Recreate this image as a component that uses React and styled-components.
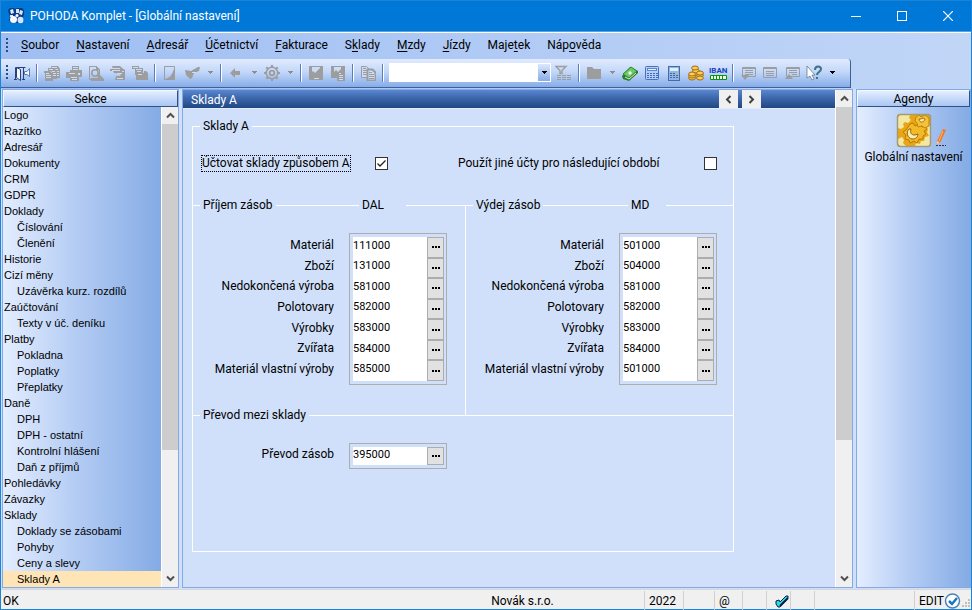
import React from "react";
import styled, { createGlobalStyle, css } from "styled-components";

const GlobalStyle = createGlobalStyle`
  *, *::before, *::after { box-sizing: border-box; }
  html, body { margin: 0; padding: 0; }
  body, button, input { font: 12px/16px Roboto, "Liberation Sans", sans-serif; color: #000; }
  button { padding: 0; border: 0; background: none; }
`;

const Window = styled.div`
  display: flex;
  flex-direction: column;
  min-height: 100vh;
  border: 1px solid #1a84d8;
  background: linear-gradient(90deg, #9ebef3, #c1d6f7);
`;

const TitleBar = styled.header`
  display: flex;
  align-items: center;
  height: 31px;
  padding-left: 7px;
  background: #0078d7;
  color: #fff;
  border-bottom: 1px solid #5e9fdf;
`;
const WindowTitle = styled.h1`
  margin: 0 0 0 5px;
  flex: 1;
  font-size: 12px;
  font-weight: 400;
`;
const CaptionButton = styled.button`
  display: grid;
  place-items: center;
  width: 46px;
  height: 30px;
  color: #fff;
`;

const MenuBar = styled.nav`
  display: flex;
  align-items: center;
  height: 27px;
  padding: 0 0 2px 5px;
  border-top: 1px solid #fff;
`;
const Grip = styled.span`
  width: 2px;
  height: 15px;
  background: repeating-linear-gradient(#2b4a80 0 2px, transparent 2px 4px);
`;
const MenuList = styled.ul`
  display: flex;
  gap: 17px;
  margin: 0 0 0 13px;
  padding: 0;
  list-style: none;
`;
const MenuButton = styled.button`
  display: block;
  white-space: nowrap;
  u { text-underline-offset: 2px; text-decoration-skip-ink: none; }
`;

const ToolBar = styled.div`
  display: flex;
  align-items: center;
  align-self: flex-start;
  height: 29px;
  padding: 0 11px 1px 5px;
  margin-bottom: 1px;
  border-radius: 0 3px 0 0;
  border-right: 1px solid #3f5f96;
  border-bottom: 1px solid #3f5f96;
  background: linear-gradient(#e1ebff, #c3d8f9 45%, #85ace8);
`;
const ToolButton = styled.button`
  display: grid;
  place-items: center;
  width: ${(p) => (p.$drop ? 14 : 22)}px;
  height: 24px;
  margin-left: ${(p) => (p.$first ? 3 : 0)}px;
  svg { display: block; }
`;
const ToolSeparator = styled.span`
  width: 2px;
  height: 18px;
  margin: 0 3px;
  border-left: 1px solid #5a7cb8;
  border-right: 1px solid #fff;
`;
const Combo = styled.div`
  display: flex;
  width: 162px;
  height: 19px;
  margin: 0 2px;
  border: 1px solid #fff;
  background: #fff;
`;
const ComboInput = styled.input`
  flex: 1;
  min-width: 0;
  border: 0;
  padding: 0 3px;
  background: #fff;
  outline: none;
`;
const ComboButton = styled.button`
  display: grid;
  place-items: center;
  width: 12px;
  background: linear-gradient(#dce8fc, #86ace8);
`;

const Workspace = styled.div`
  flex: 1;
  display: grid;
  grid-template-columns: 177px minmax(0, 1fr) 115px;
  gap: 3px;
  padding: 0 0 1px 1px;
  background: #d0e0fa;
`;
const Panel = styled.section`
  display: flex;
  flex-direction: column;
  min-width: 0;
  border: 1px solid #84aae6;
`;
const PanelHeader = styled.h2`
  height: 17px;
  margin: 0;
  border: 1px solid #f4f8ff;
  border-right-color: #34527f;
  border-bottom-color: #34527f;
  background: linear-gradient(#e4eeff, #a9c7f4);
  font-size: 12px;
  line-height: 16px;
  font-weight: 400;
  text-align: center;
`;
const shade = css`background: linear-gradient(90deg, #e3edff, #b5cdf4 45%, #84abe5);`;
const SectionBody = styled.div`
  flex: 1;
  display: flex;
`;
const SectionList = styled.ul`
  flex: 1;
  min-width: 0;
  margin: 0;
  padding: 0;
  list-style: none;
  ${shade}
`;
const SectionLink = styled.a`
  display: block;
  height: 16px;
  padding-left: ${(p) => (p.$nested ? 14 : 1)}px;
  font: 11px/16px "Liberation Sans", Arial, sans-serif;
  color: #000;
  text-decoration: none;
  white-space: nowrap;
  background: ${(p) => (p.$active ? "#ffe5b5" : "none")};
`;

const ScrollBar = styled.div`
  display: flex;
  flex-direction: column;
  width: 17px;
  border-left: 1px solid #fff;
  background: #f0f0f0;
`;
const ScrollButton = styled.button`
  display: grid;
  place-items: center;
  height: 17px;
  color: #505050;
`;
const ScrollTrack = styled.div`flex: 1;`;
const ScrollThumb = styled.div`
  height: ${(p) => p.$size}%;
  background: #cdcdcd;
`;

const MainPanel = styled(Panel)`flex-direction: row;`;
const Document = styled.div`
  flex: 1;
  min-width: 0;
`;
const DocumentHeader = styled.div`
  display: flex;
  height: 19px;
  padding: 0 74px 0 8px;
  gap: 4px;
  background: linear-gradient(#5a87d0, #3f6ab0 40%, #1f4782);
  border-bottom: 1px solid #dfeafd;
`;
const DocumentTitle = styled.h2`
  flex: 1;
  margin: 0;
  color: #fff;
  font-size: 12px;
  line-height: 20px;
  font-weight: 400;
`;
const PagerButton = styled.button`
  display: grid;
  place-items: center;
  width: 19px;
  height: 18px;
  background: #f0f0f0;
  color: #404040;
`;

const SettingsForm = styled.form`
  width: 542px;
  margin: 9px 0 34px 9px;
`;
const GroupBox = styled.fieldset`
  min-width: 0;
  height: 434px;
  margin: 0;
  padding: 0;
  border: 1px solid #fff;
`;
const GroupLegend = styled.legend`
  margin-left: 7px;
  padding: 0 3px;
  line-height: 16px;
`;
const OptionsRow = styled.div`
  display: grid;
  grid-template-columns: 173px 83px 246px auto;
  align-items: center;
  height: 59px;
  margin-bottom: 12px;
  padding-left: 9px;
`;
const OptionLabel = styled.label`
  justify-self: start;
  line-height: 15px;
  white-space: nowrap;
  outline: ${(p) => (p.$focused ? "1px dotted #000" : "none")};
`;
const CheckBox = styled.input`
  appearance: none;
  width: 13px;
  height: 13px;
  margin: 0;
  border: 1px solid #333;
  background: #fff;
  &:checked {
    background: #fff url("data:image/svg+xml,%3Csvg xmlns='http://www.w3.org/2000/svg' viewBox='0 0 11 11'%3E%3Cpath d='M1.5 5.5 4 8 9.5 2.5' fill='none' stroke='%23222' stroke-width='1.3'/%3E%3C/svg%3E");
  }
`;
const Columns = styled.div`
  display: grid;
  grid-template-columns: 273px 1fr;
`;
const Column = styled.section`
  height: 210px;
  border-right: ${(p) => (p.$ruled ? "1px solid #fff" : "0")};
`;
const Heading = styled.div`
  display: flex;
  align-items: center;
  gap: 3px;
  height: 16px;
  margin: -8px 0 0;
`;
const Rule = styled.span`
  flex: ${(p) => (p.$width ? `0 0 ${p.$width}px` : "1")};
  height: 1px;
  background: #fff;
`;
const HeadingText = styled.h3`
  margin: 0;
  font-size: 12px;
  font-weight: 400;
`;
const SideText = styled.span`
  width: ${(p) => p.$width}px;
`;
const FieldArea = styled.div`
  display: grid;
  grid-template-columns: ${(p) => p.$labels}px 98px;
  column-gap: 15px;
  padding-top: 20px;
`;
const Labels = styled.div`
  display: grid;
  grid-auto-rows: 1fr;
  align-items: center;
  justify-items: end;
  height: ${(p) => p.$height}px;
  margin-top: 2px;
  white-space: nowrap;
`;
const Frame = styled.div`
  display: grid;
  grid-template-columns: minmax(0, 1fr);
  grid-auto-rows: 1fr;
  height: ${(p) => p.$height}px;
  padding: 3px 2px 3px 3px;
  border: 1px solid #adadad;
`;
const Field = styled.div`
  display: flex;
  min-height: 0;
`;
const AccountInput = styled.input`
  flex: 1;
  min-width: 0;
  height: 100%;
  padding: 0 0 4px;
  border: 0;
  border-radius: 0;
  background: #fff;
  font-size: 11px;
  outline: none;
`;
const BrowseButton = styled.button`
  display: grid;
  place-items: center;
  width: 17px;
  border: 1px solid #adadad;
  background: #e1e1e1;
`;

const Agendas = styled.div`
  flex: 1;
  ${shade}
`;
const AgendaButton = styled.button`
  display: flex;
  flex-direction: column;
  align-items: center;
  gap: 1px;
  width: 100%;
  padding-top: 6px;
  white-space: nowrap;
`;
const AgendaIcon = styled.span`
  margin-left: 14px;
  svg { display: block; }
`;

const StatusBar = styled.footer`
  display: grid;
  grid-template-columns: 400px minmax(0, 1fr) 39px 31px 28px 24px 24px 24px 100px 57px;
  height: 20px;
  border-top: 1px solid #d7d7d7;
  background: #f0f0f0;
  line-height: 20px;
`;
const StatusCell = styled.div`
  display: flex;
  align-items: center;
  justify-content: ${(p) => (p.$center ? "center" : "flex-start")};
  margin: 1px 0;
  padding-left: ${(p) => p.$pad ?? 0}px;
  border-left: ${(p) => (p.$line ? "1px solid #d0d0d0" : "0")};
  white-space: nowrap;
`;

const G = "#9d9d9d";
const L = "#cbdcf8";
const Svg = ({ w = 16, h = 16, crisp, children }) => (
  <svg width={w} height={h} viewBox={`0 0 ${w} ${h}`} fill="none" aria-hidden="true" shapeRendering={crisp ? "crispEdges" : undefined}>
    {children}
  </svg>
);
const Caret = ({ color = "#8e8e8e" }) => (
  <Svg w={5} h={3} crisp><path d="M0 0h5v1h-1v1h-1v1h-1v-1h-1v-1h-1z" fill={color} /></Svg>
);
const Chevron = ({ d }) => (
  <Svg w={9} h={9}><path d={d} stroke="currentColor" strokeWidth="2" /></Svg>
);
const UP = "M1 6.5 4.5 3 8 6.5";
const DOWN = "M1 2.5 4.5 6 8 2.5";
const LEFT = "M6.5 1 3 4.5 6.5 8";
const RIGHT = "M2.5 1 6 4.5 2.5 8";

const AppLogo = () => (
  <Svg w={17} h={16}>
    <path d="M2 0h4l1 1 2-1h5l2 2v5l-1 2 1 4-3 2H3l-2-3 1-3-1-3-1-4z" fill="#0d3b85" />
    <path d="M2 2l3-1 1 4-3 1zM8 1h3v4H8zM12 2l3 1-1 4-3-1zM2 7l3 0v2H2z" fill="#d9e9ff" />
    <circle cx="5.500" cy="11.500" r="3.500" fill="#f4faff" />
    <ellipse cx="12.500" cy="12" rx="3" ry="3.200" fill="#d4e6ff" />
    <circle cx="9" cy="7.500" r="1.500" fill="#fff" />
  </Svg>
);

const icons = {
  exit: <><path d="M0 14.5h3M1.500 14V2.500h10M9.500 3v11M8 14.500h3" stroke="#27407f" /><path d="M2.500 2.500l4 2v11l-4-3z" fill="#f6faff" stroke="#27407f" /><path d="M15.500 3.500v8l-2.500-2h-2.500v-3H13z" fill="#f2f8ff" stroke="#5a7bb5" /></>,
  pages: <><path d="M7 1h7l2 3v9h-4v-1H9z" fill={G} /><path d="M8 2.5h5M10 4.5h4M12 6.5h3M12 8.5h3M12 10.5h3" stroke={L} /><path d="M4 3h6l3 3v8H9V9L7 6H4z" fill={G} /><path d="M5 4.5h4M8 6.5h3M9 8.5h3M9 10.5h3" stroke={L} /><path d="M0 6h6l3 3v7H1V8H0z" fill={G} /><path d="M2 8.5h3M2 10.5h5M2 12.5h5" stroke={L} /></>,
  printer: <><path d="M6 1h7v4h3v7h-3v4H4v-3H0V7h4V5h2z" fill={G} /><path d="M7 2.5h5M7 4.5h5M3 8.5h6M5 12.5h6M6 14.5h5" stroke={L} /><path d="M12 8h2v2h-2z" fill={L} /></>,
  preview: <><path d="M1.5 1.5h7l3 3v10h-10z" stroke={G} /><path d="M8 1v4h4z" fill={G} /><circle cx="7" cy="8" r="3.2" stroke={G} strokeWidth="1.6" /><path d="M3 13h7l-1-3 2-1 5 5v2H3z" fill={G} /></>,
  export: <><path d="M2 1h8l2 2 3 2v10H5l1-4h4l1-2-7-1-1-2H0V4h3z" fill={G} /><path d="M3 3.5h7M2 5.5h8M7 8.5h5M7 13.5h6" stroke={L} /><path d="M12 6h2v1h-2z" fill={L} /></>,
  archive: <><path d="M0 1h7v2h4v5h1V6h2l2 2v7H4v-5H3V4H0z" fill={G} /><path d="M1 2.500h5M4 4.500h6M5 6.500h4M6 9.500h4" stroke={L} /></>,
  page: <><path d="M2.5 1.5h10v13h-10z" stroke={G} /><path d="M12 4v10H3c5-1 7-4 9-10z" fill={G} /></>,
  stamp: <><path d="M1 5l6 1 7-4h2l-1 4-5 2-2 5-2 1-4-4z" fill={G} /><path d="M8 7.500h4" stroke={L} /></>,
  back: <path d="M2 8l5-5v3h5v4H7v3z" fill={G} />,
  gear: <><circle cx="8" cy="8" r="5.7" stroke={G} strokeWidth="1.6" /><circle cx="8" cy="8" r="2.300" stroke={G} strokeWidth="1.8" /><path d="M8 0v3M8 13v3M0 8h3M13 8h3M2.3 2.3l2 2M11.7 11.7l2 2M2.3 13.7l2-2M11.7 4.3l2-2" stroke={G} strokeWidth="2.200" /></>,
  save: <><path d="M1 1h14v14H2l-1-1z" fill={G} /><path d="M4 2h8v1L7 8 5 6 4 7zM6 13h5v1H6z" fill={L} /></>,
  saveAs: <><path d="M1 1h14v15H7v-3H1z" fill={G} /><path d="M4 2h7v2L8 7 6 5 4 7z" fill={L} /><path d="M9 8.5h2M9 10.5h4M9 12.5h4M9 14.5h4" stroke={L} /></>,
  copy: <><path d="M1.5 1.5h5l3 3v8h-8z" fill={L} stroke={G} /><path d="M3 3.5h3M3 5.500h4M3 7.500h4M3 9.500h4" stroke={G} /><path d="M7.5 4.5h5l3 3v8h-8z" fill={L} stroke={G} strokeWidth="2" /><path d="M9 7.500h3M9 9.500h5M9 11.500h5M9 13.500h5" stroke={G} /></>,
  filter: <><path d="M1 1.5h10l-4 4v3H5v-3z" stroke={G} strokeWidth="1.4" /><path d="M2 10.500h15M2 12.500h15M2 14.500h15" stroke={G} strokeDasharray="4 1" /></>,
  folder: <path d="M1 2h5l2 2h7v10H1z" fill={G} />,
  money: <><path d="M0 11l8-9 8 4v2l-9 8-6-2z" fill="#287a31" /><path d="M1 9l8-7 6 4-8 7z" fill="#6fc765" stroke="#2a8b35" /><circle cx="8" cy="8" r="1.7" fill="#edffdf" /><path d="M3 12l4 2 7-6" stroke="#d4f6ca" /></>,
  calcWide: <><rect x="1.5" y="1.5" width="13" height="13" rx="1" fill="#b6cef5" stroke="#4473c4" /><path d="M3 4.5h10" stroke="#5c86cc" strokeWidth="3" /><path d="M4 4.5h8" stroke="#edf4ff" /><path d="M3 8.5h11M3 10.5h11M3 12.5h11" stroke="#3c6bbd" strokeDasharray="2 1" /></>,
  calcTall: <><rect x="2.5" y="1.5" width="11" height="14" fill="#94b4e6" stroke="#426da6" /><path d="M4 4.5h8" stroke="#d8f4fb" strokeWidth="3" /><path d="M4 8.5h8M4 10.5h8M4 12.5h8" stroke="#416bac" strokeDasharray="2 1" /><path d="M10 8h2v1h-2z" fill="#f0b528" /></>,
  coins: <>{[[8, 9], [8, 6], [7, 3], [4, 13], [4, 11], [4, 9], [12, 10], [12, 8], [12, 13]].map(([x, y]) => <ellipse key={`${x}-${y}`} cx={x} cy={y} rx="3.4" ry="2" fill="#f9cf55" stroke="#a4690f" />)}</>,
  noteDown: <><path d="M2.5 2.5h13v9h-13z" stroke={G} /><path d="M3 3.500h12M5 5.5h8M5 7.5h8M5 9.5h8" stroke={G} /><path d="M1 10h8l-4 5z" fill={G} /></>,
  note: <><path d="M1.5 2.5h13v10h-13z" stroke={G} /><path d="M2 3.5h12M4 6.5h8M4 8.5h8M4 10.5h8" stroke={G} /></>,
  noteUp: <><path d="M2.5 2.5h13v9h-13z" stroke={G} /><path d="M3 3.5h12M5 5.500h8M5 7.5h8M8 9.5h5" stroke={G} /><path d="M1 14l4-5 4 5z" fill={G} /></>,
  help: <><path d="M9 5c0-5 6-4 6-1s-4 3-4 6M11 12v2" stroke="#3e7289" strokeWidth="2" /><path d="M1 1v12l3-2 2 4 2-1-2-4h3z" fill="#fff" stroke="#576b85" strokeWidth=".7" /></>,
};

const IbanIcon = () => (
  <Svg w={19} h={16}>
    <text x="0" y="8" fontFamily="Roboto, sans-serif" fontSize="8" fontWeight="700" fill="#1b42bd">IBAN</text>
    <path d="M1.5 10.5h16v4h-16z" fill="#fff" stroke="#009900" />
    <path d="M4.500 10v5M7.500 10v5M10.500 10v5M13.500 10v5" stroke="#009900" />
  </Svg>
);

const tools = [
  ["exit", "Konec"], "|", ["pages", "Soubor agendy"], ["printer", "Tisk"], ["preview", "Náhled"], ["export", "Export"], ["archive", "Archiv"], "|",
  ["page", "Nový záznam"], ["stamp", "Přenos"], "v", "|", ["back", "Zpět"], "v", ["gear", "Nastavení"], "v", "|",
  ["save", "Uložit"], ["saveAs", "Uložit kopii"], "|", ["copy", "Kopírovat"], "|", "combo", ["filter", "Filtr"], "|",
  ["folder", "Složka"], "v", ["money", "Pokladna"], ["calcWide", "Kalkulačka"], ["calcTall", "Výpočet"], ["coins", "Kurzy"], ["iban", "IBAN"], "|",
  ["noteDown", "Další poznámka"], ["note", "Poznámka"], ["noteUp", "Předchozí poznámka"], ["help", "Nápověda"], "V",
];

function Tool({ item, first }) {
  if (item === "|") return <ToolSeparator />;
  if (item === "v" || item === "V")
    return <ToolButton $drop aria-label="Další možnosti"><Caret color={item === "V" ? "#000" : undefined} /></ToolButton>;
  if (item === "combo")
    return (
      <Combo>
        <ComboInput aria-label="Hledat" />
        <ComboButton aria-label="Rozbalit"><Caret color="#000" /></ComboButton>
      </Combo>
    );
  const [icon, label] = item;
  return (
    <ToolButton $first={first} aria-label={label}>
      {icon === "iban" ? <IbanIcon /> : <Svg w={icon === "filter" ? 18 : 16}>{icons[icon]}</Svg>}
    </ToolButton>
  );
}

const menus = [
  ["", "S", "oubor"], ["", "N", "astavení"], ["", "A", "dresář"], ["", "Ú", "četnictví"], ["", "F", "akturace"],
  ["S", "k", "lady"], ["", "M", "zdy"], ["", "J", "ízdy"], ["Maje", "t", "ek"], ["Náp", "o", "věda"],
];

const sections = [
  "Logo", "Razítko", "Adresář", "Dokumenty", "CRM", "GDPR", "Doklady", ">Číslování", ">Členění", "Historie", "Cizí měny",
  ">Uzávěrka kurz. rozdílů", "Zaúčtování", ">Texty v úč. deníku", "Platby", ">Pokladna", ">Poplatky", ">Přeplatky", "Daně",
  ">DPH", ">DPH - ostatní", ">Kontrolní hlášení", ">Daň z příjmů", "Pohledávky", "Závazky", "Sklady",
  ">Doklady se zásobami", ">Pohyby", ">Ceny a slevy", ">Sklady A",
];

const names = ["Materiál", "Zboží", "Nedokončená výroba", "Polotovary", "Výrobky", "Zvířata", "Materiál vlastní výroby"];
const incoming = ["111000", "131000", "581000", "582000", "583000", "584000", "585000"];
const outgoing = ["501000", "504000", "581000", "582000", "583000", "584000", "501000"];

function Fields({ id, labels, values, labelWidth = 141 }) {
  const single = values.length === 1;
  return (
    <FieldArea $labels={labelWidth}>
      <Labels $height={single ? 18 : 144}>
        {labels.map((text, i) => <label key={text} htmlFor={`${id}-${i}`}>{text}</label>)}
      </Labels>
      <Frame $height={single ? 26 : 152}>
        {values.map((value, i) => (
          <Field key={i}>
            <AccountInput id={`${id}-${i}`} defaultValue={value} />
            <BrowseButton type="button" aria-label={`Vybrat účet: ${labels[i]}`}>
              <Svg w={8} h={2} crisp><path d="M0 0h2v2H0zM3 0h2v2H3zM6 0h2v2H6z" fill="#000" /></Svg>
            </BrowseButton>
          </Field>
        ))}
      </Frame>
    </FieldArea>
  );
}

function Scroll({ size }) {
  return (
    <ScrollBar>
      <ScrollButton aria-label="Nahoru"><Chevron d={UP} /></ScrollButton>
      <ScrollTrack><ScrollThumb $size={size} /></ScrollTrack>
      <ScrollButton aria-label="Dolů"><Chevron d={DOWN} /></ScrollButton>
    </ScrollBar>
  );
}

const GearPicture = () => (
  <Svg w={50} h={35}>
    <rect x="1" y="1" width="34" height="33" rx="3" fill="#e8a614" />
    <path d="M2 4l2-2h10l-1 3 2 2-3 3-3-1-2 2 1 3-3 2-3-1zM2 26l4-2 2 3-1 3 3 3H4l-2-2z" fill="#f2e8a4" />
    <path d="M34 12v21H19l1-3 4 1 1-3 3 0 1-4 4-1-2-4 1-2-2-3z" fill="#f2e8a4" />
    <path d="M14 11l3-1 2 3 4-2 3 3 4-1 1 3-3 2 2 3-3 2 0 3-4 0-2 4-3-2-4 2-1-3-4-1 1-4-3-3 3-2z" fill="#f3ba28" stroke="#b87806" />
    <path d="M20 4l3-2 2 2 4-2 4 3v8l-4 2-3-2-4 1-1-4-2-2z" fill="#f5c136" stroke="#c08410" />
    <path d="M13 16c-3 3-2 9 3 10 4 0 6-2 6-5l-3 1c-4 0-5-2-4-6z" fill="#f8efb4" stroke="#96610a" />
    <path d="M23 6c0 4 5 4 6 0l-2-1-2 1z" fill="#f8efb4" stroke="#a86f0b" />
    <rect x="1.5" y="1.5" width="33" height="32" rx="3" stroke="#a39a78" strokeWidth="1.5" />
    <path d="M47 16l3 1-6 13-3 1v-3z" fill="#f07a20" />
    <path d="M47 18l-4 10" stroke="#ffb36c" />
    <path d="M41 28l3 2-3 1z" fill="#f5d1a1" />
    <path d="M40 32.5h10" stroke="#333" strokeDasharray="2 1" />
  </Svg>
);

export default function App() {
  return (
    <Window>
      <GlobalStyle />
      <TitleBar>
        <AppLogo />
        <WindowTitle>POHODA Komplet - [Globální nastavení]</WindowTitle>
        <CaptionButton aria-label="Minimalizovat"><Svg w={10} h={10} crisp><path d="M0 5.5h10" stroke="#fff" /></Svg></CaptionButton>
        <CaptionButton aria-label="Maximalizovat"><Svg w={10} h={10} crisp><path d="M.5.5h9v9h-9z" stroke="#fff" /></Svg></CaptionButton>
        <CaptionButton aria-label="Zavřít"><Svg w={10} h={10}><path d="M0 0l10 10M10 0L0 10" stroke="#fff" strokeWidth="1.2" /></Svg></CaptionButton>
      </TitleBar>

      <MenuBar aria-label="Hlavní nabídka">
        <Grip />
        <MenuList>
          {menus.map(([before, key, after]) => (
            <li key={before + key + after}><MenuButton>{before}<u>{key}</u>{after}</MenuButton></li>
          ))}
        </MenuList>
      </MenuBar>

      <ToolBar role="toolbar">
        <Grip />
        {tools.map((item, i) => <Tool key={i} item={item} first={i === 0} />)}
      </ToolBar>

      <Workspace>
        <Panel>
          <PanelHeader>Sekce</PanelHeader>
          <SectionBody>
            <SectionList>
              {sections.map((s) => {
                const nested = s.startsWith(">");
                return (
                  <li key={s}>
                    <SectionLink href="#" $nested={nested} $active={s === ">Sklady A"}>{nested ? s.slice(1) : s}</SectionLink>
                  </li>
                );
              })}
            </SectionList>
            <Scroll size={73} />
          </SectionBody>
        </Panel>

        <MainPanel>
          <Document>
            <DocumentHeader>
              <DocumentTitle>Sklady A</DocumentTitle>
              <PagerButton aria-label="Předchozí"><Chevron d={LEFT} /></PagerButton>
              <PagerButton aria-label="Další"><Chevron d={RIGHT} /></PagerButton>
            </DocumentHeader>
            <SettingsForm>
              <GroupBox>
                <GroupLegend>Sklady A</GroupLegend>
                <OptionsRow>
                  <OptionLabel htmlFor="method-a" $focused>Účtovat sklady způsobem A</OptionLabel>
                  <CheckBox id="method-a" type="checkbox" defaultChecked />
                  <OptionLabel htmlFor="next-period">Použít jiné účty pro následující období</OptionLabel>
                  <CheckBox id="next-period" type="checkbox" />
                </OptionsRow>
                <Columns>
                  <Column $ruled>
                    <Heading>
                      <Rule $width={7} />
                      <HeadingText>Příjem zásob</HeadingText>
                      <Rule />
                      <SideText $width={41}>DAL</SideText>
                      <Rule $width={59} />
                    </Heading>
                    <Fields id="in" labels={names} values={incoming} />
                  </Column>
                  <Column>
                    <Heading>
                      <Rule $width={7} />
                      <HeadingText>Výdej zásob</HeadingText>
                      <Rule />
                      <SideText $width={32}>MD</SideText>
                      <Rule $width={67} />
                    </Heading>
                    <Fields id="out" labels={names} values={outgoing} labelWidth={138} />
                  </Column>
                </Columns>
                <Heading>
                  <Rule $width={7} />
                  <HeadingText>Převod mezi sklady</HeadingText>
                  <Rule />
                </Heading>
                <Fields id="move" labels={["Převod zásob"]} values={["395000"]} />
              </GroupBox>
            </SettingsForm>
          </Document>
          <Scroll size={72} />
        </MainPanel>

        <Panel>
          <PanelHeader>Agendy</PanelHeader>
          <Agendas>
            <AgendaButton>
              <AgendaIcon><GearPicture /></AgendaIcon>
              Globální nastavení
            </AgendaButton>
          </Agendas>
        </Panel>
      </Workspace>

      <StatusBar>
        <StatusCell $pad={2}>OK</StatusCell>
        <StatusCell $center>Novák s.r.o.</StatusCell>
        <StatusCell $line $pad={4}>2022</StatusCell>
        <StatusCell $line />
        <StatusCell $line $pad={4}>@</StatusCell>
        <StatusCell $line />
        <StatusCell $line $pad={8}>
          <Svg w={14} h={14}><path d="M1 7l3-1 1 2 6-6h2v2l-8 9H3L1 10z" fill="#20e0e8" stroke="#101a40" /><path d="M5 12l8-8" stroke="#101a40" strokeWidth="2" /></Svg>
        </StatusCell>
        <StatusCell $line />
        <StatusCell $line />
        <StatusCell $line $pad={4}>
          EDIT
          <Svg w={17} h={16}><circle cx="8.5" cy="8" r="7" fill="#fff" stroke="#5480b4" strokeWidth="1.5" /><path d="M5 8l3 3 5-6" stroke="#1677c5" strokeWidth="2.5" /></Svg>
          <Svg w={9} h={16} crisp><path d="M7 6h2v2H7zM4 9h2v2H4zM7 9h2v2H7zM1 12h2v2H1zM4 12h2v2H4zM7 12h2v2H7z" fill="#bfbfbf" /></Svg>
        </StatusCell>
      </StatusBar>
    </Window>
  );
}
